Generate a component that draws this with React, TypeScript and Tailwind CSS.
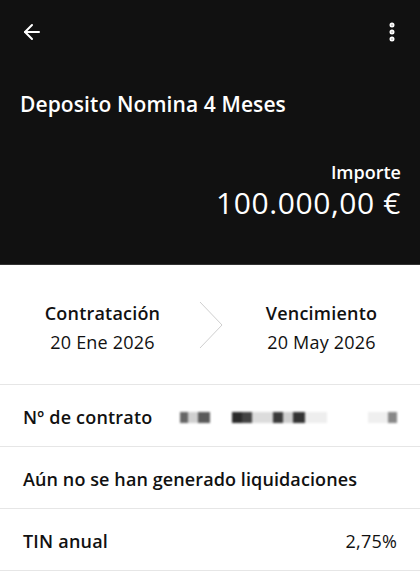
import { ArrowLeft, EllipsisVertical } from "lucide-react";

const blocks = [
  { w: "w-[8px]", c: "bg-[#666]" },
  { w: "w-[10px]", c: "bg-[#d0d0d0]" },
  { w: "w-[12px]", c: "bg-[#5a5a5a]" },
  { w: "w-[22px]", c: "bg-white" },
  { w: "w-[10px]", c: "bg-[#2a2a2a]" },
  { w: "w-[10px]", c: "bg-[#444]" },
  { w: "w-[21px]", c: "bg-[#dcdcdc]" },
  { w: "w-[10px]", c: "bg-[#3a3a3a]" },
  { w: "w-[10px]", c: "bg-[#cfcfcf]" },
  { w: "w-[12px]", c: "bg-[#333]" },
  { w: "w-[22px]", c: "bg-[#eeeeee]" },
  { w: "w-[41px]", c: "bg-white" },
  { w: "w-[20px]", c: "bg-[#efefef]" },
  { w: "w-[9px]", c: "bg-[#888]" },
];

const App = () => {
  return (
    <div className="w-[420px] h-[578px] bg-white overflow-hidden font-['Open_Sans',sans-serif] text-[#111]">
      <div className="h-[265px] bg-[#111111] text-white flex flex-col border-b border-[#333]">
        <div className="h-[64px] flex items-center justify-between pl-[20px] pr-[16px]">
          <ArrowLeft size={24} strokeWidth={2} />
          <EllipsisVertical size={24} strokeWidth={3} />
        </div>
        <div className="px-[20px] pt-[25px] text-[21px] font-semibold leading-[30px] tracking-[0.1px]">Deposito Nomina 4 Meses</div>
        <div className="flex flex-col items-end pr-[19px] pt-[41px]">
          <span className="text-[18px] font-semibold leading-[25px]">Importe</span>
          <span className="text-[30px] font-normal leading-[36px] tracking-[0.6px]">100.000,00 €</span>
        </div>
      </div>
      <div className="h-[120px] flex items-center border-b border-[#e6e6e6]">
        <div className="flex-1 flex flex-col items-center pl-[6px] pt-[7px]">
          <span className="text-[18px] font-semibold leading-[29px] tracking-[0.2px]">Contratación</span>
          <span className="text-[18px] leading-[29px] tracking-[0.2px]">20 Ene 2026</span>
        </div>
        <svg width="26" height="48" viewBox="0 0 26 48" className="shrink-0">
          <path d="M1 1 L23 24 L1 47" fill="none" stroke="#cfcfcf" strokeWidth="1" />
        </svg>
        <div className="flex-1 flex flex-col items-center pr-[2px] pt-[7px]">
          <span className="text-[18px] font-semibold leading-[29px] tracking-[0.2px]">Vencimiento</span>
          <span className="text-[18px] leading-[29px] tracking-[0.2px]">20 May 2026</span>
        </div>
      </div>
      <div className="h-[62px] flex items-center pl-[23px] pr-[23px] pt-[3px] border-b border-[#e6e6e6]">
        <span className="text-[18px] font-semibold w-[157px] tracking-[0.2px]">Nº de contrato</span>
        <div className="flex-1 flex items-center h-[11px] blur-[0.8px]">
          {blocks.map((b, i) => (
            <div key={i} className={`h-[11px] ${b.w} ${b.c}`} />
          ))}
        </div>
      </div>
      <div className="h-[62px] flex items-center px-[23px] pt-[3px] border-b border-[#e6e6e6]">
        <span className="text-[18px] font-semibold tracking-[0.1px]">Aún no se han generado liquidaciones</span>
      </div>
      <div className="h-[62px] flex items-center justify-between pl-[23px] pr-[23px] pt-[3px] border-b border-[#e6e6e6]">
        <span className="text-[18px] font-semibold tracking-[0.2px]">TIN anual</span>
        <span className="text-[18px] tracking-[0.2px]">2,75%</span>
      </div>
    </div>
  );
};

export default App;
